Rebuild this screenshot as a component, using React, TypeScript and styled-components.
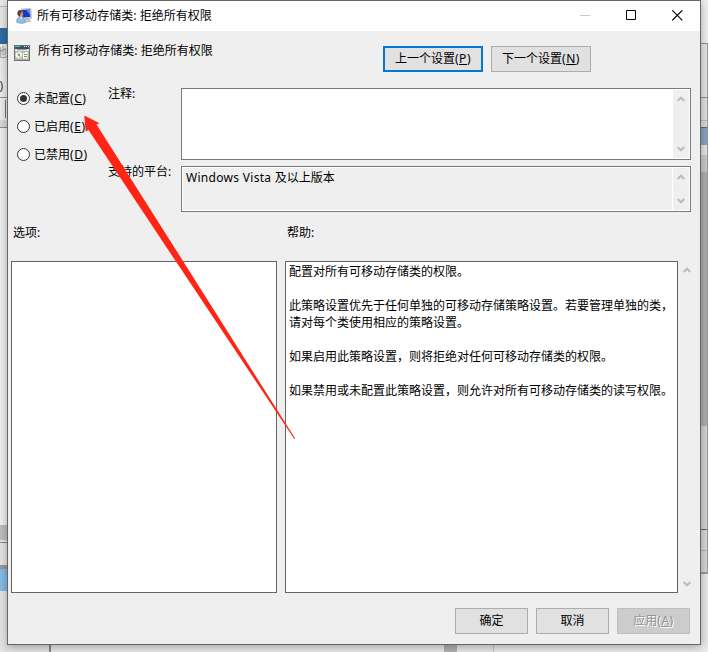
import React from 'react';
import styled, { createGlobalStyle } from 'styled-components';

const GlobalStyle = createGlobalStyle`
  * { box-sizing: border-box; }
  body {
    margin: 0;
    overflow: hidden;
    background: #e9e9e9;
    color: #000;
    font: 12px/17px "Noto Sans", "Noto Sans CJK SC", sans-serif;
  }
`;

const Desktop = styled.div`
  display: grid;
  grid-template-columns: 7px 694px 7px;
  grid-template-rows: 645px 7px;
  width: 708px;
  height: 652px;
  overflow: hidden;
`;

const Strip = styled.div`
  display: flex;
  flex-direction: column;
  overflow: hidden;
`;

const Band = styled.div<{ $h: number; $c: string; $edge?: string }>`
  flex: none;
  height: ${p => p.$h}px;
  background: ${p => p.$c};
  border-right: ${p => (p.$edge ? `1px solid ${p.$edge}` : 'none')};
  white-space: nowrap;
  overflow: hidden;
`;

const Cut = styled.div<{ $color: string; $pad?: number }>`
  display: flex;
  justify-content: flex-end;
  padding-right: ${p => p.$pad ?? 0}px;
  color: ${p => p.$color};
`;

const Caret = styled.div`
  width: 6px;
  height: 18px;
  margin-top: 2px;
  border-right: 1px solid #777;
`;

const BottomStrip = styled.div`
  grid-column: 1 / -1;
  display: flex;
`;

const Piece = styled.div<{ $w?: number; $c: string }>`
  ${p => (p.$w ? `flex: none; width: ${p.$w}px;` : 'flex: 1;')}
  background: ${p => p.$c};
`;

const Dialog = styled.div`
  position: relative;
  display: flex;
  flex-direction: column;
  border: 1px solid #666;
  background: #efefef;
  box-shadow: 0 2px 9px rgba(0, 0, 0, 0.32);
`;

const TitleBar = styled.div`
  display: flex;
  align-items: center;
  flex: none;
  height: 30px;
  padding: 0 17px 0 8px;
  background: #fff;
`;

const Title = styled.span`
  flex: 1;
  margin: -1px 0 0 5px;
  letter-spacing: 0.03px;
`;

const Controls = styled.div`
  display: flex;
  gap: 35px;
  height: 11px;
  margin-bottom: 1px;
`;

const Heading = styled.div`
  display: flex;
  height: 57px;
  padding: 15px 0 0 6px;

  > svg { margin-top: -1px; }
`;

const PolicyName = styled.div`
  width: 345px;
  margin: -4px 0 0 8px;
  letter-spacing: 0.03px;
`;

const Button = styled.button<{ $w: number; $focus?: boolean }>`
  width: ${p => p.$w}px;
  height: 26px;
  margin: 0;
  padding: 0 0 1px;
  border: ${p => (p.$focus ? '2px solid #0078d7' : '1px solid #adadad')};
  background: #e1e1e1;
  color: #000;
  font: inherit;
  &:disabled {
    border-color: #bfbfbf;
    background: #ccc;
    color: #929292;
    text-shadow: 1px 1px 0 #fff;
  }
`;

const Spacer = styled.span`
  width: 8px;
`;

const Key = styled.span`
  letter-spacing: 0.55px;
  u { text-underline-offset: 1px; text-decoration-thickness: 1px; }
`;

const StateArea = styled.div`
  display: grid;
  grid-template-columns: 91px 73px 510px;
  height: 124px;
  padding-left: 9px;
`;

const Radios = styled.div`
  display: flex;
  flex-direction: column;
  gap: 11px;
  padding-top: 2px;
`;

const RadioRow = styled.label`
  display: flex;
  align-items: center;
  gap: 4px;
  height: 17px;
  white-space: nowrap;
`;

const Dot = styled.span<{ $on?: boolean }>`
  display: flex;
  align-items: center;
  justify-content: center;
  width: 13px;
  height: 13px;
  border: 1px solid #333;
  border-radius: 50%;
  background: #fff;
  &::after {
    content: "";
    width: 7px;
    height: 7px;
    border-radius: 50%;
    background: ${p => (p.$on ? '#333' : 'transparent')};
  }
`;

const Labels = styled.div`
  display: grid;
  grid-template-rows: 78px 46px;
  margin-top: -3px;
`;

const Fields = styled.div`
  display: grid;
  grid-template-rows: 72px 46px;
  row-gap: 6px;
`;

const Field = styled.div<{ $readOnly?: boolean }>`
  display: flex;
  border: 1px solid #7a7a7a;
  background: ${p => (p.$readOnly ? '#efefef' : '#fff')};
  padding: 1px;
  box-shadow: inset 0 0 0 1px #fff;
`;

const FieldText = styled.div`
  flex: 1;
  padding: 1px 3px;
`;

const Latin = styled.span`
  letter-spacing: 0.3px;
`;

const ScrollBar = styled.div<{ $w: number; $pad: number; $line?: boolean }>`
  display: flex;
  flex-direction: column;
  align-items: center;
  justify-content: space-between;
  width: ${p => p.$w}px;
  padding: ${p => p.$pad}px 0;
  background: #efefef;
  box-shadow: ${p => (p.$line ? '-1px 0 0 #fff' : 'none')};
`;

const PaneLabels = styled.div`
  display: grid;
  grid-template-columns: 274px 1fr;
  height: 49px;
  padding: 12px 0 0 5px;
`;

const Panes = styled.div`
  display: grid;
  grid-template-columns: 266px 8px 393px 17px;
  height: 332px;
  padding-left: 3px;
`;

const Pane = styled.div`
  border: 1px solid #646464;
  background: #fff;
  padding: 1px 3px;
  white-space: pre;
`;

const Footer = styled.div`
  display: flex;
  justify-content: flex-end;
  gap: 8px;
  padding: 15px 10px 0 0;
`;

const ArrowOverlay = styled.svg`
  position: absolute;
  left: 76px;
  top: 114px;
  pointer-events: none;
`;

const helpText = `配置对所有可移动存储类的权限。

此策略设置优先于任何单独的可移动存储策略设置。若要管理单独的类，
请对每个类使用相应的策略设置。

如果启用此策略设置，则将拒绝对任何可移动存储类的权限。

如果禁用或未配置此策略设置，则允许对所有可移动存储类的读写权限。`;

const Chevron = ({ down }: { down?: boolean }) => (
  <svg width="8" height="6" viewBox="0 0 8 6">
    <path d={down ? 'M.7 1 4 4.3 7.3 1' : 'M.7 5 4 1.7 7.3 5'} fill="none" stroke="#bcbcbc" strokeWidth="2" />
  </svg>
);

const Scroll = (p: { w: number; pad: number; line?: boolean }) => (
  <ScrollBar $w={p.w} $pad={p.pad} $line={p.line}>
    <Chevron />
    <Chevron down />
  </ScrollBar>
);

const Hot = ({ text, k }: { text: string; k: string }) => (
  <span>{text}<Key>(<u>{k}</u>)</Key></span>
);

const ComputerUserIcon = () => (
  <svg width="16" height="16" viewBox="0 0 16 16">
    <path d="M5 1 15 0.5 15.5 10.5 6 11Z" fill="#d5d8d2" stroke="#a5aaa8" strokeWidth=".6" />
    <path d="M6 2 14 1.5 14.3 9 6.5 9.6Z" fill="#1638c8" />
    <path d="M10 1.8 14 1.5 14.2 7Z" fill="#5d84f0" />
    <path d="M9 11h4l2 2.5-6 .8Z" fill="#c8c9c0" stroke="#999" strokeWidth=".4" />
    <path d="M.5 14c0-4 2-5 4-5s4.500 1.500 4.500 5.500c-2 1.300-6 1.300-8.500-.5Z" fill="#8ebbe4" stroke="#5c88b8" strokeWidth=".5" />
    <ellipse cx="4.300" cy="6" rx="2.600" ry="3.300" fill="#c99a76" />
    <path d="M1.400 6.500C1 2 4 1.400 6.300 2.700L5 5 3.500 8.500Z" fill="#584434" />
    <path d="m4 9 2 0-.5 3Z" fill="#f5faff" />
  </svg>
);

const PolicyIcon = () => (
  <svg width="16" height="16" viewBox="0 0 16 16">
    <path d="M0 0h16v16H0z" fill="#697274" />
    <path d="M1 1h14v3H1z" fill="#34516f" />
    <path d="M1 1h5v1H1z" fill="#65b5a3" />
    <path d="M10 1h1v1h-1zM12 1h1v1h-1zM14 1h1v1h-1z" fill="#e7edef" />
    <path d="M1 4h14v2H1z" fill="#e6e6de" />
    <path d="M3 4h10v1H3z" fill="#9aa0a0" />
    <path d="M1 6h14v9H1z" fill="#b4b8b2" />
    <circle cx="5" cy="10" r="4" fill="#f2f3ea" stroke="#999f9b" strokeWidth=".6" />
    <path d="M5 10 2 7l2-1ZM5 10l3 2-2 2Z" fill="#b6d6a6" />
    <circle cx="5" cy="10" r="1" fill="#697b70" />
    <path d="M8.500 6.500h5.500v7.500h-5.500z" fill="#fffdf0" stroke="#9b9b91" strokeWidth=".6" />
    <path d="M10 9.500h3M10 11.500h3" stroke="#858b82" />
    <path d="M9 7h2v1H9z" fill="#e1b74f" />
  </svg>
);

const leftBands: [number, string][] = [
  [6, '#e9e9e9'], [1, '#bbb'], [21, '#e8e8e8'], [16, '#2c6da6'],
];

const rightBands: [number, string, string?][] = [
  [43, '#f0f0f0'], [1, '#8f8f8f'], [53, '#e6e6e6', '#999'], [1, '#8f8f96'],
  [22, '#e2e2e2', '#999'], [1, '#bbb', '#999'], [6, '#dcdcdc', '#999'], [1, '#666', '#999'],
  [17, '#8ba4c4', '#999'], [10, '#e6e6e6', '#999'], [17, '#cbcbcb', '#999'], [254, '#b0b0b0', '#999'],
  [103, '#d4d4d4', '#999'], [1, '#666', '#999'], [20, '#d8d8d8', '#999'], [1, '#b8b8b8', '#999'],
  [21, '#d6d6d6', '#999'], [2, '#999'], [70, '#e9e9e9'],
];

export default function App() {
  return (
    <>
      <GlobalStyle />
      <Desktop lang="zh-CN">
        <Strip>
          {leftBands.map(([h, c], i) => <Band key={i} $h={h} $c={c} />)}
          <Band $h={33} $c="#ebebeb"><Cut $color="#999">地</Cut></Band>
          <Band $h={20} $c="#ededed"><Cut $color="#333" $pad={4}>)</Cut></Band>
          <Band $h={1} $c="#9595a0" />
          <Band $h={22} $c="#eee"><Caret /></Band>
          <Band $h={7} $c="#dadada" />
          <Band $h={1} $c="#8b8b99" />
          <Band $h={397} $c="#f0f0f0" />
          <Band $h={15} $c="#bfbfbf" />
          <Band $h={2} $c="#e9e9e9" />
          <Band $h={1} $c="#858b92" />
          <Band $h={22} $c="#e6e6e6" />
          <Band $h={4} $c="#999" />
          <Band $h={22} $c="#86bbe8" />
          <Band $h={55} $c="#e6e6e6" />
        </Strip>
        <Dialog>
          <TitleBar>
            <ComputerUserIcon />
            <Title>所有可移动存储类: 拒绝所有权限</Title>
            <Controls>
              <svg width="11" height="11"><path d="M0 5.500h10" stroke="#ccc" /></svg>
              <svg width="11" height="11"><path d="M.5.5h9v9h-9z" fill="none" stroke="#000" /></svg>
              <svg width="11" height="11"><path d="m.3.300 10 10m0-10-10 10" fill="none" stroke="#000" strokeWidth="1.100" /></svg>
            </Controls>
          </TitleBar>
          <Heading>
            <PolicyIcon />
            <PolicyName>所有可移动存储类: 拒绝所有权限</PolicyName>
            <Button $w={100} $focus><Hot text="上一个设置" k="P" /></Button>
            <Spacer />
            <Button $w={100}><Hot text="下一个设置" k="N" /></Button>
          </Heading>
          <StateArea>
            <Radios>
              <RadioRow><Dot $on /><Hot text="未配置" k="C" /></RadioRow>
              <RadioRow><Dot /><Hot text="已启用" k="E" /></RadioRow>
              <RadioRow><Dot /><Hot text="已禁用" k="D" /></RadioRow>
            </Radios>
            <Labels>
              <span>注释:</span>
              <span>支持的平台:</span>
            </Labels>
            <Fields>
              <Field>
                <FieldText />
                <Scroll w={16} pad={6} />
              </Field>
              <Field $readOnly>
                <FieldText><Latin>Windows Vista </Latin>及以上版本</FieldText>
                <Scroll w={16} pad={6} line />
              </Field>
            </Fields>
          </StateArea>
          <PaneLabels>
            <span>选项:</span>
            <span>帮助:</span>
          </PaneLabels>
          <Panes>
            <Pane />
            <span />
            <Pane>{helpText}</Pane>
            <Scroll w={17} pad={6} />
          </Panes>
          <Footer>
            <Button $w={73}>确定</Button>
            <Button $w={73}>取消</Button>
            <Button $w={73} disabled><Hot text="应用" k="A" /></Button>
          </Footer>
          <ArrowOverlay width="214" height="326" viewBox="84 115 214 326">
            <path d="M84.300 115.500 99.500 123.300 96.500 124.600 119 160 176 250 295.200 438.500 294.300 439 168.300 250 108.500 160 88.500 130 85.700 131.500Z" fill="#ff2413" />
          </ArrowOverlay>
        </Dialog>
        <Strip>
          {rightBands.map(([h, c, e], i) => <Band key={i} $h={h} $c={c} $edge={e} />)}
        </Strip>
        <BottomStrip>
          <Piece $w={49} $c="#e4e4e4" />
          <Piece $w={2} $c="#888" />
          <Piece $w={393} $c="#ebebeb" />
          <Piece $w={13} $c="#b2b2b2" />
          <Piece $w={36} $c="#e9e9e9" />
          <Piece $w={1} $c="#c4c4c4" />
          <Piece $c="#ececec" />
        </BottomStrip>
      </Desktop>
    </>
  );
}
